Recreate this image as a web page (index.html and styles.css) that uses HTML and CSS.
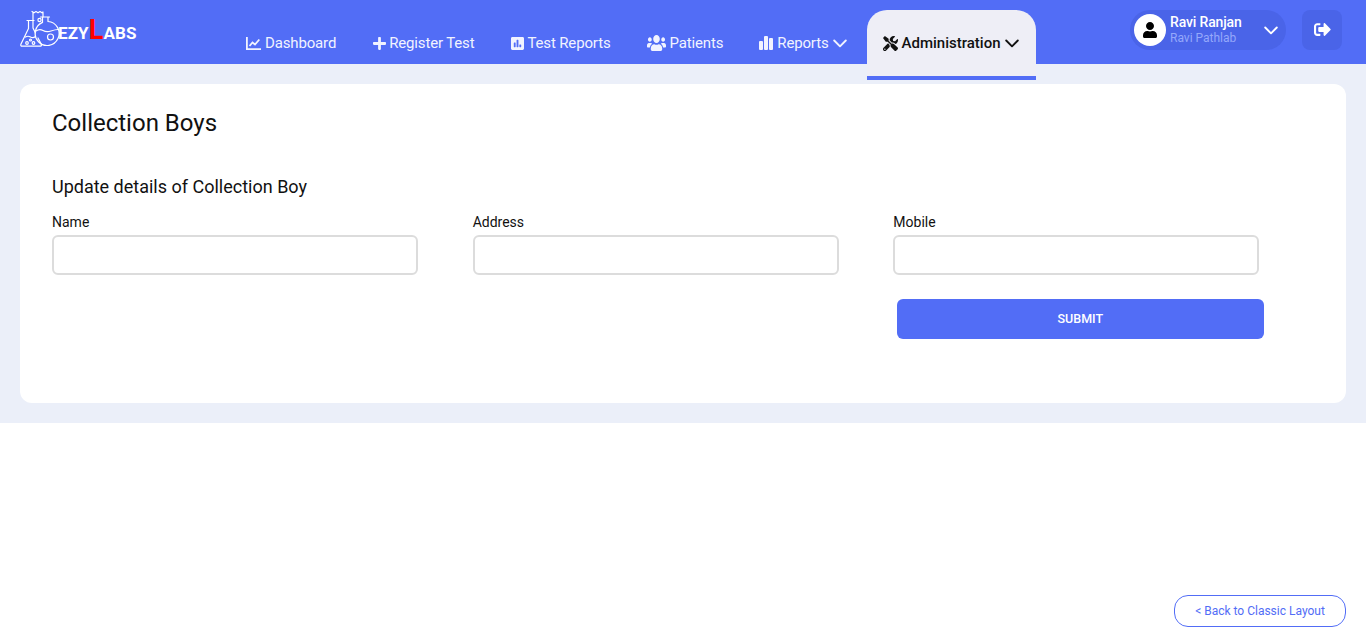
FILE: index.html
```html
<!DOCTYPE html>
<html lang="en">
<head>
<meta charset="utf-8">
<title>Collection Boys</title>
<link rel="stylesheet" href="styles.css">
</head>
<body>
<header class="topbar">
  <a class="logo">
    <svg class="logo-mark" viewBox="20 9 40 40" fill="none" stroke="#fff" stroke-width="1.200" stroke-linejoin="round" stroke-linecap="round">
      <path d="M27 20.500h7M28.500 20.500v8L21 44q-.8 2.200 1.200 2.200H40q2 0 1.200-2.200l-3.200-6M33 20.500v7.500l2.500 5"/>
      <path d="M25.500 37q2.500-1.500 5 0t5-.5"/>
      <circle cx="27" cy="43" r="1.300"/><circle cx="33.500" cy="43" r="1.300"/><circle cx="30.500" cy="40" r="1"/>
      <path d="M40.500 17h9M42.500 17v5.400A12 12 0 1 0 48 21.500V17"/>
      <path d="M36 31q3.500-2.500 7-.5t8 .5 7-1.500"/>
      <circle cx="50.500" cy="37" r="3"/><circle cx="39.500" cy="20" r="1.600"/>
      <path d="M32 11.500l2 1.300 2-1.300 2 1.300 2-1.300 2 1.300 1-.8M33 12v8.500M43 12v5"/>
    </svg>
    <span class="logo-text">EZY<span class="logo-l">L</span>ABS</span>
  </a>
  <nav class="nav">
    <a class="nav-item">
      <svg class="icon icon-chart" viewBox="0 0 15 13"><path class="icon-line" d="M.9 0v12.100H15"/><path class="icon-line" d="M3.500 9l3-3.500L9 7.500l4.300-5"/></svg>
      Dashboard
    </a>
    <a class="nav-item">
      <svg class="icon icon-sm" viewBox="0 0 448 512"><path d="M416 208H272V64c0-17.670-14.330-32-32-32h-32c-17.670 0-32 14.330-32 32v144H32c-17.670 0-32 14.330-32 32v32c0 17.670 14.330 32 32 32h144v144c0 17.670 14.330 32 32 32h32c17.670 0 32-14.330 32-32V304h144c17.670 0 32-14.330 32-32v-32c0-17.670-14.330-32-32-32z"/></svg>
      Register Test
    </a>
    <a class="nav-item">
      <svg class="icon icon-sm" viewBox="0 0 448 512"><path d="M400 32H48C21.500 32 0 53.500 0 80v352c0 26.500 21.500 48 48 48h352c26.500 0 48-21.500 48-48V80c0-26.500-21.500-48-48-48zM160 368c0 8.840-7.160 16-16 16h-32c-8.840 0-16-7.160-16-16V240c0-8.840 7.160-16 16-16h32c8.840 0 16 7.160 16 16v128zm96 0c0 8.840-7.160 16-16 16h-32c-8.840 0-16-7.160-16-16V144c0-8.840 7.160-16 16-16h32c8.840 0 16 7.160 16 16v224zm96 0c0 8.840-7.160 16-16 16h-32c-8.840 0-16-7.160-16-16v-64c0-8.840 7.160-16 16-16h32c8.840 0 16 7.160 16 16v64z"/></svg>
      Test Reports
    </a>
    <a class="nav-item">
      <svg class="icon icon-wide" viewBox="0 32 640 448" preserveAspectRatio="none"><path d="M96 224c35.300 0 64-28.700 64-64s-28.700-64-64-64-64 28.700-64 64 28.700 64 64 64zm448 0c35.300 0 64-28.700 64-64s-28.700-64-64-64-64 28.700-64 64 28.700 64 64 64zm32 32h-64c-17.600 0-33.500 7.100-45.100 18.600 40.300 22.100 68.900 62 75.100 109.400h66c17.700 0 32-14.300 32-32v-32c0-35.300-28.700-64-64-64zm-256 0c61.900 0 112-50.100 112-112S381.900 32 320 32 208 82.100 208 144s50.100 112 112 112zm76.800 32h-8.300c-20.800 10-43.900 16-68.500 16s-47.600-6-68.500-16h-8.300C179.600 288 128 339.600 128 403.200V432c0 26.500 21.500 48 48 48h288c26.500 0 48-21.500 48-48v-28.800c0-63.600-51.600-115.200-115.200-115.200zm-223.700-13.400C161.500 263.100 145.600 256 128 256H64c-35.300 0-64 28.700-64 64v32c0 17.700 14.300 32 32 32h65.900c6.300-47.400 34.900-87.300 75.200-109.400z"/></svg>
      Patients
    </a>
    <a class="nav-item">
      <svg class="icon icon-bars" viewBox="0 0 14 14"><rect x="0" y="5" width="4" height="9" rx="1"/><rect x="5" y="0" width="4" height="14" rx="1"/><rect x="10" y="2" width="4" height="12" rx="1"/></svg>
      Reports
      <svg class="chevron" viewBox="0 0 14 9"><path d="M1.200 1.500L7 7.300l5.800-5.800"/></svg>
    </a>
    <a class="nav-item nav-item-active">
      <svg class="icon" viewBox="0 0 512 512"><path d="M501.100 395.700L384 278.600c-23.100-23.100-57.600-27.600-85.400-13.900L192 158.100V96L64 0 0 64l96 128h62.100l106.600 106.600c-13.600 27.800-9.200 62.300 13.900 85.400l117.100 117.100c14.600 14.600 38.200 14.600 52.700 0l52.700-52.700c14.500-14.600 14.500-38.200 0-52.700zM331.700 225c28.300 0 54.900 11 74.900 31l19.400 19.400c15.800-6.900 30.800-16.500 43.800-29.500 37.100-37.100 49.700-89.300 37.900-136.700-2.200-9-13.500-12.100-20.100-5.500l-74.400 74.400-67.900-11.300L334 98.900l74.400-74.400c6.600-6.600 3.400-17.900-5.700-20.200-47.400-11.700-99.600.9-136.600 37.900-28.500 28.500-41.900 66.100-41.200 103.600l82.100 82.100c8.100-1.900 16.500-2.900 24.700-2.900zm-103.900 82l-56.700-56.700L18.700 402.800c-25 25-25 65.500 0 90.500s65.500 25 90.500 0l123.600-123.600c-7.600-19.900-9.900-41.600-5-62.700zM64 472c-13.200 0-24-10.800-24-24 0-13.300 10.700-24 24-24s24 10.700 24 24c0 13.200-10.700 24-24 24z"/></svg>
      Administration
      <svg class="chevron" viewBox="0 0 14 9"><path d="M1.200 1.500L7 7.300l5.800-5.800"/></svg>
    </a>
  </nav>
  <div class="account">
    <div class="user-pill">
      <span class="avatar">
        <svg viewBox="0 0 448 512"><path d="M224 256c70.700 0 128-57.300 128-128S294.700 0 224 0 96 57.300 96 128s57.300 128 128 128zm89.600 32h-16.700c-22.200 10.200-46.900 16-72.900 16s-50.600-5.800-72.900-16h-16.700C60.200 288 0 348.200 0 422.400V464c0 26.500 21.500 48 48 48h352c26.500 0 48-21.500 48-48v-41.600c0-74.200-60.200-134.400-134.400-134.400z"/></svg>
      </span>
      <span class="user-text">
        <span class="user-name">Ravi Ranjan</span>
        <span class="user-org">Ravi Pathlab</span>
      </span>
      <svg class="chevron user-chevron" viewBox="0 0 14 9"><path d="M1.200 1.500L7 7.300l5.800-5.800"/></svg>
    </div>
    <button class="logout" type="button" aria-label="Log out">
      <svg viewBox="0 0 512 512"><path d="M497 273L329 441c-15 15-41 4.500-41-17v-96H152c-13.300 0-24-10.700-24-24v-96c0-13.300 10.700-24 24-24h136V88c0-21.400 25.900-32 41-17l168 168c9.300 9.400 9.300 24.600 0 34zM192 436v-40c0-6.600-5.400-12-12-12H96c-17.700 0-32-14.300-32-32V160c0-17.700 14.300-32 32-32h84c6.600 0 12-5.400 12-12V76c0-6.600-5.400-12-12-12H96c-53 0-96 43-96 96v192c0 53 43 96 96 96h84c6.600 0 12-5.400 12-12z"/></svg>
    </button>
  </div>
</header>
<main class="content">
  <section class="card">
    <h1 class="page-title">Collection Boys</h1>
    <h2 class="form-title">Update details of Collection Boy</h2>
    <form class="form-grid">
      <div class="field">
        <label class="field-label" for="name">Name</label>
        <input class="field-input" id="name" type="text">
      </div>
      <div class="field">
        <label class="field-label" for="address">Address</label>
        <input class="field-input" id="address" type="text">
      </div>
      <div class="field">
        <label class="field-label" for="mobile">Mobile</label>
        <input class="field-input" id="mobile" type="text">
      </div>
      <button class="submit" type="button">SUBMIT</button>
    </form>
  </section>
</main>
<a class="classic-link">&lt; Back to Classic Layout</a>
</body>
</html>
```
FILE: styles.css
```css
* {
  box-sizing: border-box;
}

html,
body {
  margin: 0;
  padding: 0;
  background: #fff;
  font-family: Roboto, "Liberation Sans", sans-serif;
  color: #111;
}

body {
  min-height: 634px;
  overflow: hidden;
}

.topbar {
  display: flex;
  align-items: flex-start;
  height: 64px;
  padding-left: 20px;
  background: #526df6;
  position: relative;
  z-index: 1;
}

.logo {
  display: flex;
  align-items: flex-start;
  width: 210px;
  height: 64px;
  padding-top: 9px;
  flex: none;
}

.logo-mark {
  width: 40px;
  height: 40px;
  flex: none;
}

.logo-text {
  margin: 6px 0 0 -2px;
  color: #fff;
  font-size: 17px;
  font-weight: 700;
  line-height: 30px;
  letter-spacing: 0.1px;
  white-space: nowrap;
}

.logo-l {
  color: #f00;
  font-size: 27px;
}

.nav {
  display: flex;
  align-items: flex-start;
  gap: 4px;
  padding-top: 10px;
  flex: none;
}

.nav-item {
  display: flex;
  align-items: center;
  height: 66px;
  padding: 0 16px;
  gap: 4px;
  color: #f1f3ff;
  font-size: 15px;
  letter-spacing: -0.15px;
  line-height: 66px;
  white-space: nowrap;
}

.nav-item-active {
  height: 70px;
  padding-right: 17px;
  border-bottom: 4px solid #526df6;
  border-radius: 20px 20px 0 0;
  background: #eeeef6;
  color: #111;
  font-weight: 500;
  letter-spacing: 0;
}

.icon {
  width: 15px;
  height: 15px;
  fill: currentColor;
  flex: none;
}

.icon-sm {
  width: 13px;
  height: 15px;
  margin: 0 -0.500px 0 0.500px;
}

.icon-chart {
  height: 13px;
}

.icon-line {
  fill: none;
  stroke: currentColor;
  stroke-width: 1.800;
}

.icon-wide {
  width: 19px;
  height: 16px;
}

.icon-bars {
  width: 14px;
  height: 14px;
}

.chevron {
  width: 14px;
  height: 9px;
  fill: none;
  stroke: currentColor;
  stroke-width: 1.900;
  stroke-linecap: round;
  stroke-linejoin: round;
  flex: none;
}

.account {
  display: flex;
  gap: 16px;
  margin-left: auto;
  padding: 10px 24px 0 0;
}

.user-pill {
  display: flex;
  align-items: center;
  width: 156px;
  height: 40px;
  padding: 0 8px 0 4px;
  border-radius: 20px;
  background: #4a64e8;
}

.avatar {
  display: flex;
  align-items: center;
  justify-content: center;
  width: 32px;
  height: 32px;
  border-radius: 50%;
  background: #fff;
  flex: none;
}

.avatar svg {
  width: 14px;
  height: 16px;
}

.user-text {
  display: flex;
  flex-direction: column;
  margin-left: 4px;
}

.user-name {
  color: #fff;
  font-size: 14px;
  font-weight: 500;
  letter-spacing: -0.15px;
  line-height: 16px;
}

.user-org {
  color: #95a8fb;
  font-size: 12px;
  line-height: 16px;
}

.user-chevron {
  margin-left: auto;
  color: #fff;
}

.logout {
  display: flex;
  align-items: center;
  justify-content: center;
  width: 40px;
  height: 40px;
  padding: 0;
  border: 0;
  border-radius: 8px;
  background: #4a64e8;
}

.logout svg {
  width: 17px;
  height: 17px;
  fill: #fff;
  margin-top: -2px;
}

.content {
  padding: 20px;
  background: #ebeff9;
}

.card {
  height: 319px;
  padding: 25px 32px 0;
  border-radius: 12px;
  background: #fff;
}

.page-title {
  margin: 0;
  color: #111;
  font-size: 24px;
  font-weight: 400;
  line-height: 28px;
}

.form-title {
  margin: 39px 0 0;
  color: #111;
  font-size: 18px;
  font-weight: 400;
  line-height: 22px;
}

.form-grid {
  display: grid;
  grid-template-columns: repeat(3, 1fr);
  row-gap: 24px;
  margin-top: 16px;
}

.field {
  display: flex;
  flex-direction: column;
}

.field-label {
  margin-bottom: 5px;
  font-size: 14px;
  line-height: 16px;
}

.field-input {
  width: 366px;
  height: 40px;
  border: 2px solid #dcdcdc;
  border-radius: 6px;
  background: #fff;
}

.submit {
  grid-column: 3;
  width: 367px;
  height: 40px;
  margin-left: 3.500px;
  padding: 0 0 2px;
  border: 0;
  border-radius: 6px;
  background: #526df6;
  color: #fff;
  font-family: inherit;
  font-size: 12.500px;
  font-weight: 500;
}

.classic-link {
  position: fixed;
  right: 20px;
  bottom: 7px;
  display: flex;
  align-items: center;
  justify-content: center;
  width: 172px;
  height: 32px;
  border: 1px solid #526df6;
  border-radius: 14px;
  background: #fff;
  color: #526df6;
  font-size: 12px;
}
```
